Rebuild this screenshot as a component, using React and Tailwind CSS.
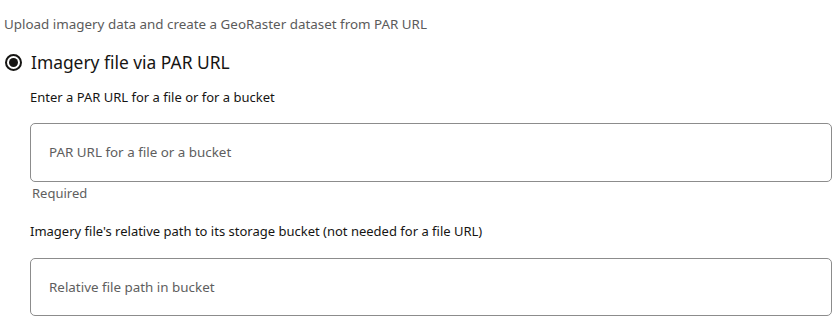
export default function App() {
  return (
    <div className="min-h-[326px] w-[840px] bg-white pl-[4px] pt-[15px] font-['Noto_Sans',sans-serif]">
      <p className="text-[13.4px] leading-[18px] text-[#5b5b5b]">
        Upload imagery data and create a GeoRaster dataset from PAR URL
      </p>

      <label className="mt-[17px] flex h-[24px] items-center">
        <span className="ml-[1px] flex h-[17px] w-[17px] items-center justify-center rounded-full border-2 border-[#161513]">
          <span className="h-[9px] w-[9px] rounded-full bg-[#161513]" />
        </span>
        <span className="ml-[9px] text-[17.4px] leading-[24px] text-[#161513]">
          Imagery file via PAR URL
        </span>
      </label>

      <div className="pl-[26px] pr-[8px]">
        <p className="mt-[14px] text-[13px] leading-[18px] text-[#161513]">
          Enter a PAR URL for a file or for a bucket
        </p>
        <div className="mt-[17px] flex h-[59px] items-center rounded-[5px] border border-[#8c8c8c] px-[18px]">
          <span className="text-[13.4px] text-[#5e5e5e]">PAR URL for a file or a bucket</span>
        </div>
        <p className="mt-[2px] pl-[2px] text-[13px] leading-[18px] text-[#5e5e5e]">Required</p>

        <p className="mt-[20px] text-[13px] leading-[18px] text-[#161513]">
          Imagery file's relative path to its storage bucket (not needed for a file URL)
        </p>
        <div className="mt-[18px] flex h-[58px] items-center rounded-[5px] border border-[#8c8c8c] px-[18px]">
          <span className="text-[13.4px] text-[#5e5e5e]">Relative file path in bucket</span>
        </div>
      </div>
    </div>
  )
}
